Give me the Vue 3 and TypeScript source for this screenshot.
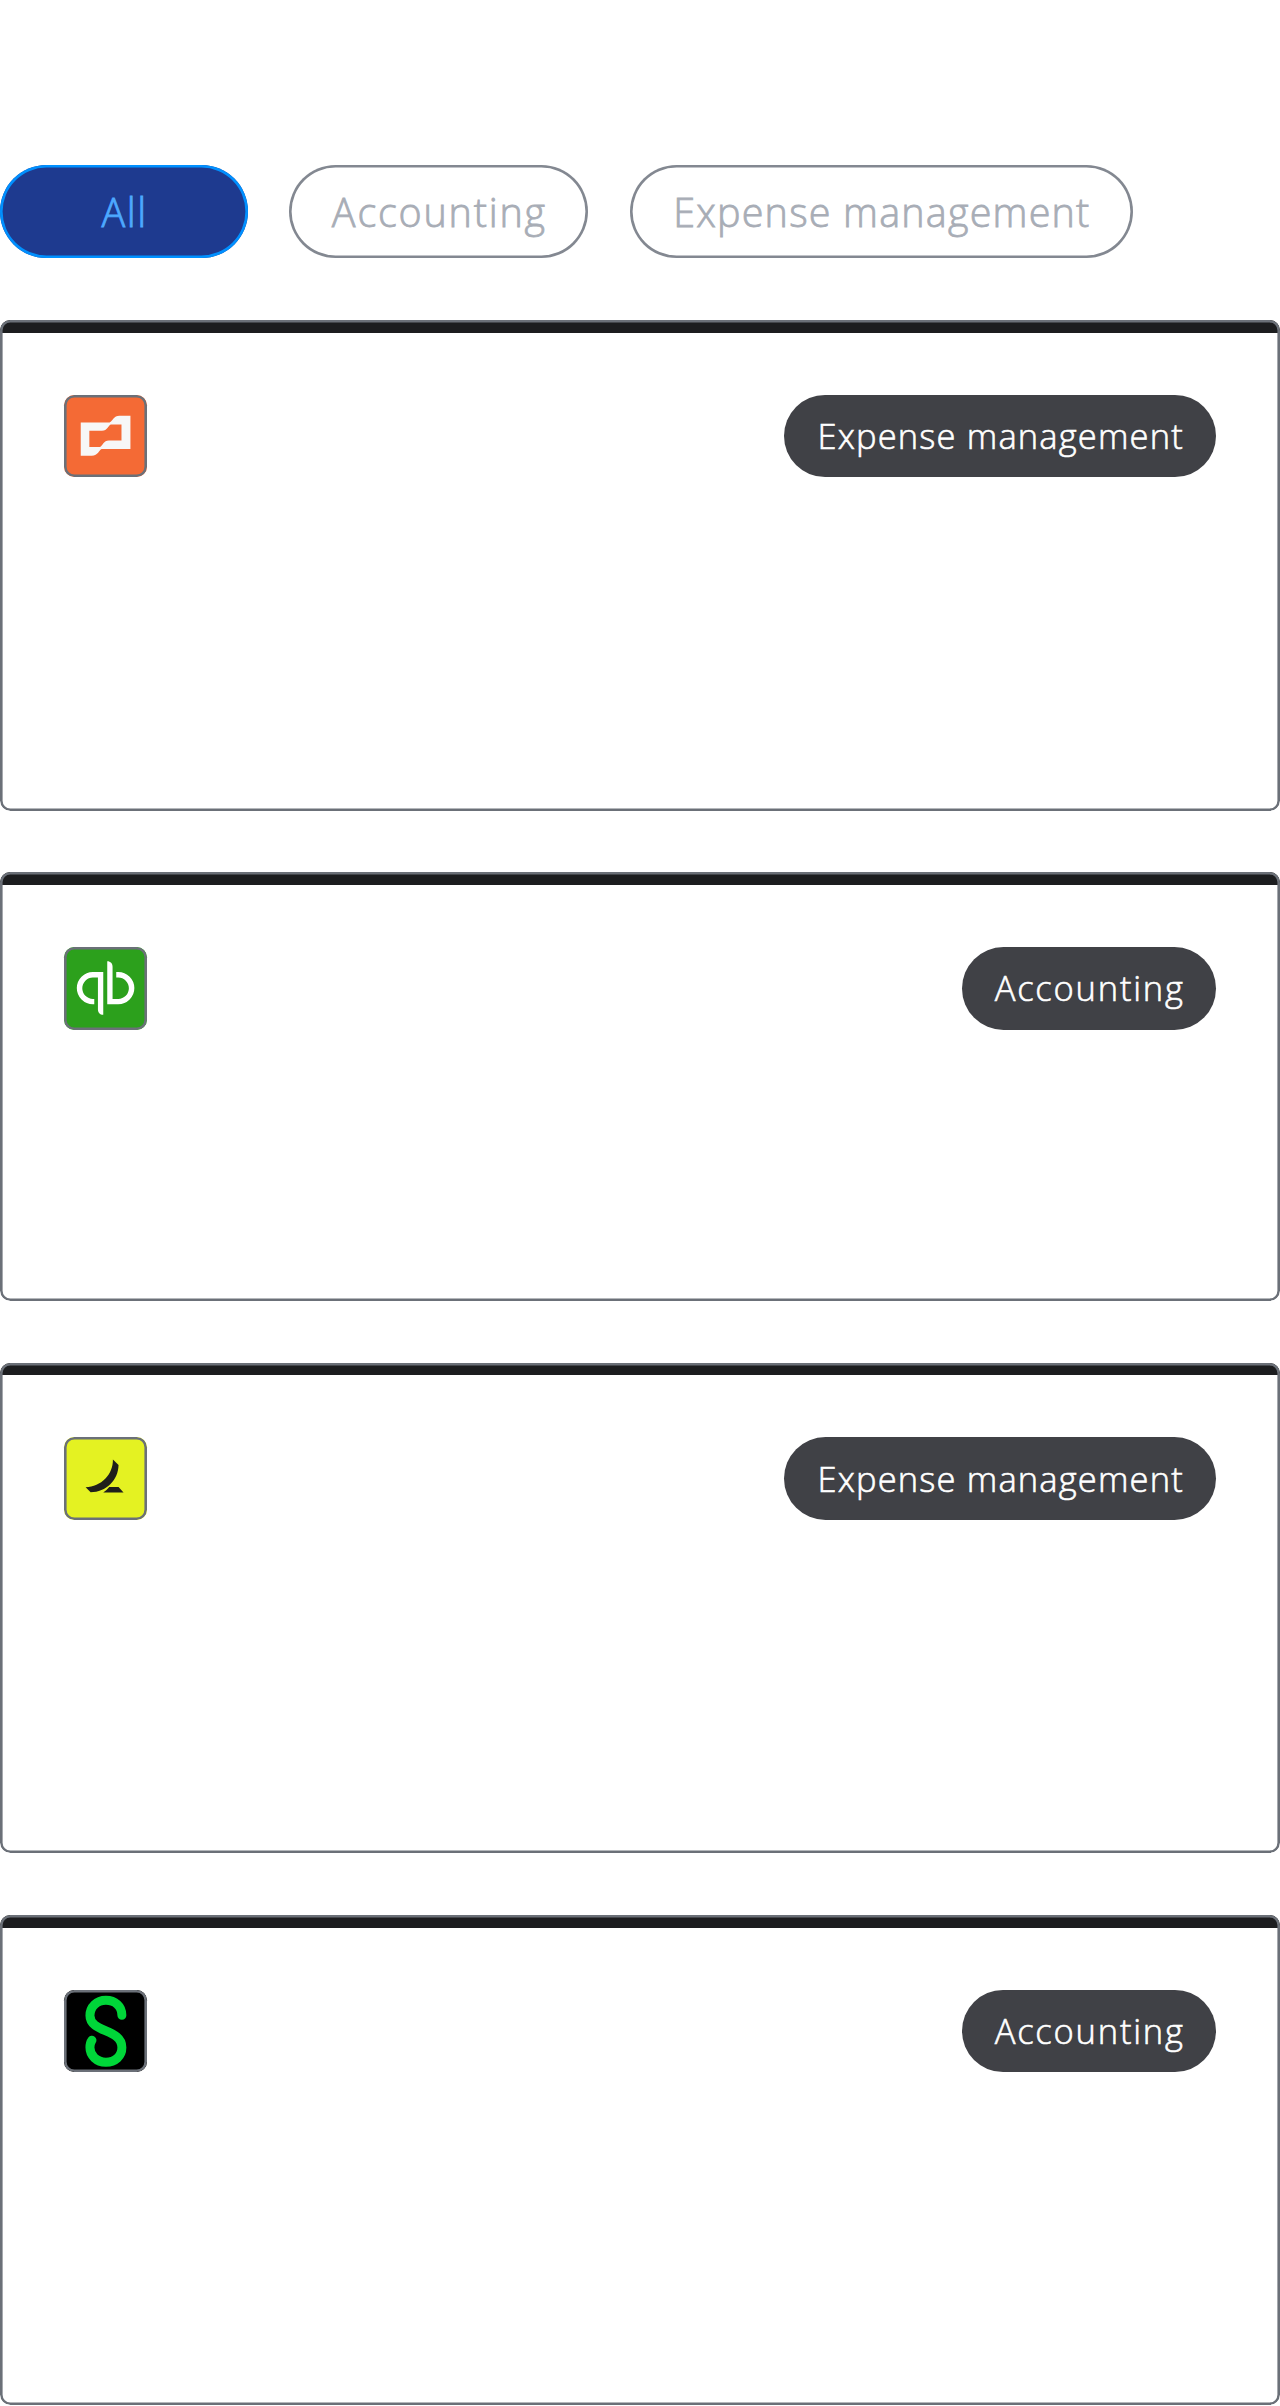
<script setup lang="ts">
import { ref } from 'vue'

type Category = 'All' | 'Accounting' | 'Expense management'
type Logo = 'brex' | 'quickbooks' | 'ramp' | 'sage'

interface Integration {
  logo: Logo
  category: Category
  size: 'tall' | 'short'
}

const filters: { label: Category; kind: string }[] = [
  { label: 'All', kind: 'all' },
  { label: 'Accounting', kind: 'accounting' },
  { label: 'Expense management', kind: 'expense' },
]
const active = ref<Category>('All')

const integrations: Integration[] = [
  { logo: 'brex', category: 'Expense management', size: 'tall' },
  { logo: 'quickbooks', category: 'Accounting', size: 'short' },
  { logo: 'ramp', category: 'Expense management', size: 'tall' },
  { logo: 'sage', category: 'Accounting', size: 'tall' },
]
</script>

<template>
  <main class="page">
    <nav class="filters">
      <button
        v-for="f in filters"
        :key="f.label"
        type="button"
        :class="['filter', f.kind, { active: active === f.label }]"
        @click="active = f.label"
      ><span>{{ f.label }}</span></button>
    </nav>

    <section class="cards">
      <article v-for="item in integrations" :key="item.logo" :class="['card', item.size]">
        <div class="bar"></div>
        <header class="head">
          <div :class="['logo', item.logo]">
            <svg v-if="item.logo === 'brex'" viewBox="193 253 248 249">
              <path fill="#f7f7f7" fill-rule="evenodd" d="M243 336H330C340 332 342 316 360 316H393V416H306C298 419 296 436 276 436H243ZM269 361V410H301C309 406 312 390 328 390H366V342H334C325 345 324 361 307 361Z" />
            </svg>
            <svg v-else-if="item.logo === 'quickbooks'" viewBox="43 51 248 248">
              <path fill="#fff" d="M130 126H161V255C151 255 145 248 145 239V143H130A32 32 0 0 0 130 207H134V223H130A48.500 48.500 0 0 1 130 126ZM173 94C183 94 189 101 189 110V207H206A32 32 0 0 0 206 143H200V126H206A48.500 48.500 0 0 1 206 223H173Z" />
            </svg>
            <svg v-else-if="item.logo === 'ramp'" viewBox="43 51 248 248">
              <path fill="#1f1f1b" d="M190 119L207 135C206 181 170 216 123 217L108 202C155 201 191 164 190 119ZM179 201H207L222 218H161Q171 211 179 201Z" />
            </svg>
            <svg v-else viewBox="43 43 248 248">
              <path fill="none" stroke="#00d639" stroke-width="27" stroke-linecap="round" d="M217 119C217 91 196 74 169 74C141 74 121 94 121 120C121 172 217 159 217 216C217 242 197 260 169 260C141 260 121 240 121 216C121 206 124 198 127 194" />
            </svg>
          </div>
          <span :class="['tag', item.category === 'Accounting' ? 'accounting' : 'expense']">
            <span>{{ item.category }}</span>
          </span>
        </header>
      </article>
    </section>
  </main>
</template>

<style>
body {
  background: #fff;
}
</style>

<style scoped>
.page {
  box-sizing: border-box;
  width: 1280px;
  height: 2406px;
  padding-top: 165px;
  overflow: hidden;
  font-family: 'Open Sans', 'Liberation Sans', sans-serif;
  font-weight: 300;
  background: #fff;
}
.filters {
  display: flex;
  gap: 41.3px;
}
.filter {
  display: flex;
  align-items: center;
  justify-content: center;
  box-sizing: border-box;
  height: 93px;
  padding: 0;
  border: 0;
  border-radius: 47px;
  background: transparent;
  box-shadow: inset 0 0 0 2.6px #838891;
  color: #a8adb6;
  font: inherit;
  font-size: 39.5px;
  line-height: 54px;
  white-space: nowrap;
  -webkit-text-stroke: 0.8px currentColor;
}
.filter.all {
  width: 247.7px;
  letter-spacing: 1.6px;
}
.filter.accounting {
  width: 299.3px;
  letter-spacing: 1.8px;
}
.filter.expense {
  width: 503px;
  letter-spacing: 1.2px;
}
.filter span {
  margin-right: -1.5px;
}
.filter.active {
  background: #1e3a8f;
  box-shadow: inset 0 0 0 2.6px #0090ff;
  color: #4da9ff;
}
.cards {
  display: flex;
  flex-direction: column;
  gap: 61.7px;
  margin-top: 62.3px;
}
.card {
  position: relative;
  flex: none;
  box-sizing: border-box;
  padding: 74.7px 64.4px 0;
  border-radius: 10.3px;
  overflow: hidden;
}
.card::after {
  content: '';
  position: absolute;
  inset: 0;
  border-radius: inherit;
  box-shadow: inset 0 0 0 2.6px #6b7078;
}
.card.tall { height: 490.500px; }
.card.short { height: 428.500px; }
.bar {
  position: absolute;
  top: 0;
  left: 0;
  right: 0;
  height: 12.7px;
  background: #1c1d1f;
}
.head {
  display: flex;
  justify-content: space-between;
}
.logo {
  position: relative;
  width: 82.500px;
  height: 82.500px;
  border-radius: 10.3px;
  overflow: hidden;
}
.logo::after {
  content: '';
  position: absolute;
  inset: 0;
  border-radius: inherit;
  box-shadow: inset 0 0 0 2.6px #6b7078;
}
.logo svg {
  display: block;
  width: 100%;
  height: 100%;
}
.brex { background: #f46a35; }
.quickbooks { background: #2ca01c; }
.ramp { background: #e4f222; }
.sage { background: #000; }
.tag {
  display: flex;
  align-items: center;
  justify-content: center;
  height: 82.500px;
  border-radius: 42px;
  background: #404146;
  color: #fff;
  font-size: 34.500px;
  line-height: 48px;
  white-space: nowrap;
  -webkit-text-stroke: 0.6px currentColor;
}
.tag.expense {
  width: 431.200px;
  letter-spacing: 1.15px;
}
.tag.accounting {
  width: 253.200px;
  letter-spacing: 1.8px;
}
.tag span {
  margin-right: -1.4px;
}
</style>
